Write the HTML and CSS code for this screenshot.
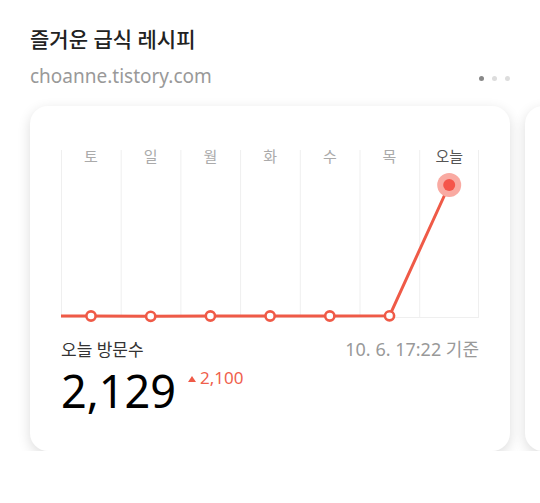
FILE: index.html
```html
<!DOCTYPE html>
<html lang="ko">
<head>
    <meta charset="UTF-8">
    <meta name="viewport" content="width=device-width, initial-scale=1.0">
    <title>즐거운 급식 레시피</title>
    <link rel="stylesheet" href="styles.css">
</head>
<body>
    <div class="blog-head">
        <h2 class="blog-title">즐거운 급식 레시피</h2>
        <div class="blog-sub">
            <span class="blog-url">choanne.tistory.com</span>
            <div class="pager">
                <span class="dot active"></span>
                <span class="dot"></span>
                <span class="dot"></span>
            </div>
        </div>
    </div>

    <div class="card-row">
        <div class="stat-card">
            <svg class="chart" width="418" height="182" viewBox="0 0 418 182">
                <!-- grid -->
                <g stroke="#efefef" stroke-width="1">
                    <line x1="0.5" y1="8" x2="0.5" y2="175" />
                    <line x1="60.2" y1="8" x2="60.2" y2="175" />
                    <line x1="119.9" y1="8" x2="119.9" y2="175" />
                    <line x1="179.6" y1="8" x2="179.6" y2="175" />
                    <line x1="239.3" y1="8" x2="239.3" y2="175" />
                    <line x1="299" y1="8" x2="299" y2="175" />
                    <line x1="358.7" y1="8" x2="358.7" y2="175" />
                    <line x1="417.5" y1="8" x2="417.5" y2="175" />
                    <line x1="0" y1="175.5" x2="418" y2="175.5" />
                </g>
                <g class="day-label" text-anchor="middle">
                    <text x="30" y="20">토</text>
                    <text x="89.7" y="20">일</text>
                    <text x="149.4" y="20">월</text>
                    <text x="209.1" y="20">화</text>
                    <text x="268.8" y="20">수</text>
                    <text x="328.5" y="20">목</text>
                    <text x="388.2" y="20" class="today">오늘</text>
                </g>
                <polyline fill="none" stroke="#ef5a47" stroke-width="3" stroke-linejoin="round"
                    points="0,174 30,174 89.7,174.3 149.4,174 209.1,174 268.8,174 328.5,173.8 388.2,43" />
                <g fill="#fff" stroke="#ef5a47" stroke-width="2.6">
                    <circle cx="30" cy="174" r="4.6" />
                    <circle cx="89.7" cy="174.3" r="4.6" />
                    <circle cx="149.4" cy="174" r="4.6" />
                    <circle cx="209.1" cy="174" r="4.6" />
                    <circle cx="268.8" cy="174" r="4.6" />
                    <circle cx="328.5" cy="173.8" r="4.6" />
                </g>
                <circle cx="388.2" cy="43" r="12" fill="#f9aaa2" />
                <circle cx="388.2" cy="43" r="6" fill="#f5554a" />
            </svg>

            <div class="stat-info">
                <span class="stat-name">오늘 방문수</span>
                <span class="stat-time">10. 6. 17:22 기준</span>
            </div>
            <div class="stat-value">
                <span class="count">2,129</span>
                <span class="diff"><i class="up"></i>2,100</span>
            </div>
        </div>
        <div class="stat-card"></div>
    </div>
</body>
</html>
```

FILE: styles.css
```css
body {
    margin: 0;
    background: #fff;
    font-family: "Noto Sans", "Noto Sans CJK KR", sans-serif;
    color: #222;
}
.blog-head {
    padding: 25px 30px 0;
}
.blog-title {
    margin: 0;
    font-size: 21px;
    line-height: 28px;
    font-weight: 500;
    color: #222;
}
.blog-sub {
    display: flex;
    align-items: center;
    justify-content: space-between;
    margin-top: 11px;
}
.blog-url {
    font-size: 19px;
    line-height: 24px;
    color: #999;
}
.pager {
    display: flex;
    gap: 8px;
    margin-top: 4px;
}
.dot {
    width: 5px;
    height: 5px;
    border-radius: 50%;
    background: #ddd;
}
.dot.active {
    background: #888;
}
.card-row {
    display: flex;
    gap: 15px;
    padding: 18px 0 0 30px;
    overflow: hidden;
}
.stat-card {
    flex: 0 0 480px;
    height: 345px;
    box-sizing: border-box;
    padding: 36px 31px 0;
    background: #fff;
    border-radius: 18px;
    box-shadow: 0 4px 13px rgba(0, 0, 0, 0.14);
}
.chart {
    display: block;
}
.day-label text {
    font-size: 15px;
    font-family: "Noto Sans CJK KR", sans-serif;
    fill: #aaa;
}
.day-label text.today {
    fill: #555;
}
.stat-info {
    display: flex;
    align-items: baseline;
    justify-content: space-between;
    margin-top: 14px;
    line-height: 22px;
}
.stat-name {
    font-size: 17px;
    color: #333;
}
.stat-time {
    font-size: 18px;
    color: #999;
}
.stat-value {
    display: flex;
    align-items: flex-start;
    margin-top: 4px;
}
.count {
    font-size: 45px;
    line-height: 52px;
    color: #000;
}
.diff {
    display: flex;
    align-items: center;
    margin: 2px 0 0 12px;
    font-size: 17px;
    line-height: 22px;
    color: #ef5f4d;
}
.up {
    width: 0;
    height: 0;
    margin: 1px 4px 0 0;
    border-left: 4px solid transparent;
    border-right: 4px solid transparent;
    border-bottom: 6px solid #ef5a47;
}
```
